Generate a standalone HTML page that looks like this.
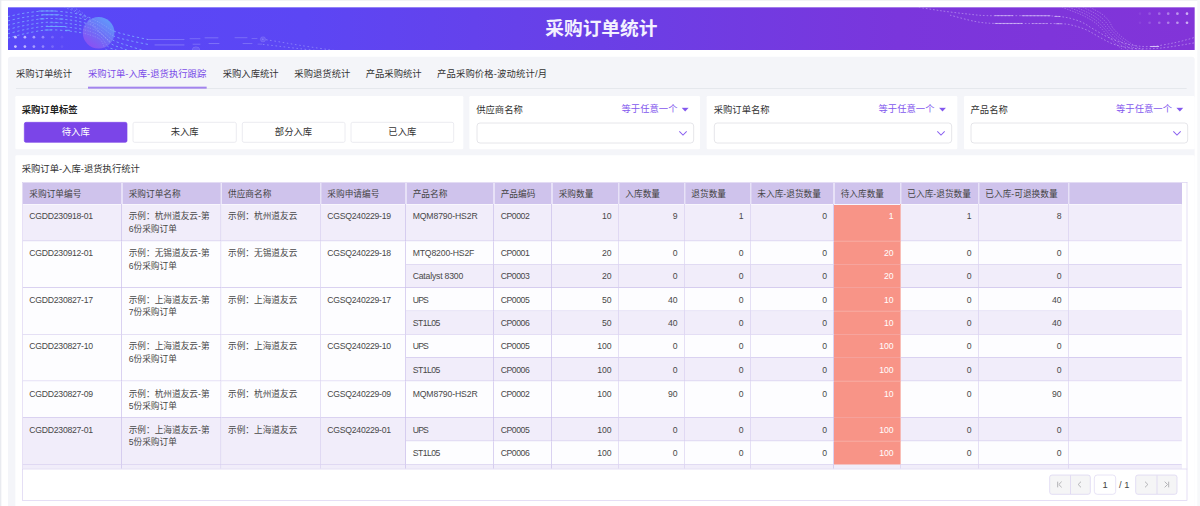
<!DOCTYPE html>
<html lang="zh-CN">
<head>
<meta charset="utf-8">
<title>采购订单统计</title>
<style>
*{box-sizing:border-box;margin:0;padding:0}
html,body{width:1200px;height:506px;overflow:hidden;background:#fff}
body{font-family:"Liberation Sans","Noto Sans CJK SC",sans-serif;font-size:14px;color:#333;line-height:19px}
#stage{position:absolute;left:0;top:0;width:1800px;height:759px;transform:scale(0.666667);transform-origin:0 0;background:#fff;overflow:hidden}
.abs{position:absolute}
#topstrip{left:0;top:0;width:1800px;height:1.4px;background:#eaecf1}
#leftstrip{left:0;top:0;width:2px;height:759px;background:#e9ebf0}
#rightstrip{left:1796px;top:0;width:4px;height:759px;background:#f7f8fa}
#banner{left:12px;top:11px;width:1780px;height:64px;background:linear-gradient(90deg,#5848f8 0%,#5c46f4 25%,#6a3fe6 50%,#7a36dc 75%,#8234d8 100%);overflow:hidden}
#banner svg{position:absolute;left:0;top:0}
#title{left:0;top:0;width:1780px;height:64px;line-height:65px;text-align:center;color:#f3f1ff;font-size:28px;font-weight:bold;letter-spacing:0}
#panel{left:12px;top:85px;width:1780px;height:690px;background:#f4f5f9;border-radius:4px}
.tabs{left:12px;top:0;width:1756px;height:47.3px}
.tabs:before{content:"";position:absolute;left:0;right:0;top:47.1px;height:1.1px;background:#dfe1e7}
.tab{position:absolute;top:0;height:46.3px;line-height:53.5px;white-space:nowrap;color:#333}
.tab.on{color:#7a4ce8}
.tab.on:after{content:"";position:absolute;left:-0.5px;right:-1px;top:45.3px;height:2.8px;background:#a384ee}
.card{position:absolute;background:#fff;border-radius:2px}
.lbl{position:absolute;white-space:nowrap;color:#333}
.any{position:absolute;white-space:nowrap;color:#8358ee}
.sel{position:absolute;height:31px;border:1px solid #d9dae0;border-radius:5px;background:#fff}
.sel svg{position:absolute;right:9px;top:11px}
.btn{position:absolute;top:39px;width:155.3px;height:31px;line-height:29px;text-align:center;border:1px solid #e2e2ea;border-radius:3px;background:#fff;color:#333}
.btn.on{background:#7b45e8;border-color:#7b45e8;color:#fff}

.tbox{position:absolute;left:10.500px;top:40.500px;width:1748px;height:431px;border:1px solid #d8cff0;border-bottom:0;overflow:hidden;background:#fff}
table.grid{border-collapse:separate;border-spacing:0;table-layout:fixed;width:1739px;font-size:13px}
.grid th{height:32px;background:#cfc3ec;font-weight:normal;text-align:left;padding:1px 0 0 9px;border-right:1px solid #f4f1fc;border-left:1px solid #f4f1fc;border-bottom:0;color:#444;white-space:nowrap;line-height:30px;vertical-align:middle;overflow:hidden}
.grid td{vertical-align:top;padding:7.500px 10px 0 10px;border-right:1px solid #c9bdeb;border-bottom:1px solid #c9bdeb;color:#484848;background:#fdfdff;line-height:19px;overflow:hidden;white-space:nowrap}
.grid tr.a td{background:#f1edfa}
.grid tr.a td[rowspan]{background:#f1edfa}
.grid td.n{text-align:right;padding-right:9.500px}
.grid tr.s td{padding-top:9.250px}
.grid th:last-child{border-right:0}
.grid th:first-child{border-left:0;padding-left:10px}
.grid tbody tr:first-child td{box-shadow:inset 0 1.500px 0 #f8f6fd}
.grid td:last-child{border-right-color:transparent}
.grid td.w{background:#f89487 !important;color:#fff;border-right-color:#f89487;border-bottom-color:#f3a9a6}
.en{letter-spacing:-0.400px}
.pager{position:absolute;left:10.500px;top:470.500px;width:1748px;height:48px;border:1px solid #d8cff0;background:#fff}
.pg{position:absolute;top:8px;height:30px;border:1px solid #d8d0f0;border-radius:4px;background:#f5f5f6}
.pg i{position:absolute;left:50%;top:0;bottom:0;width:1px;background:#d8d0f0}
.pg svg{position:absolute;left:-1px;top:-1px}
.pin{position:absolute;top:8px;width:33px;height:30px;border:1px solid #ddd6f2;border-radius:5px;background:#fff;text-align:center;line-height:28px;color:#444;font-size:14px}
.ptx{position:absolute;top:8px;line-height:30px;color:#444;white-space:nowrap;font-size:14px}
</style>
</head>
<body>
<div id="stage">
<div class="abs" id="topstrip"></div>
<div class="abs" id="leftstrip"></div>
<div class="abs" id="rightstrip"></div>
<div class="abs" id="banner">
<svg width="1780" height="64" viewBox="0 0 1186.667 42.667"><defs><linearGradient id="sph" x1="0.85" y1="0.1" x2="0.2" y2="0.95"><stop offset="0" stop-color="#62a4fb"/><stop offset="0.5" stop-color="#7072f6"/><stop offset="1" stop-color="#9150f2"/></linearGradient></defs><path d="M0.0 9.2C3.0 8.6 11.3 6.5 18.0 5.6C24.7 4.7 32.5 3.6 40.0 3.5C47.5 3.5 56.4 4.5 62.7 5.4C69.0 6.3 73.1 7.3 78.0 9.0C82.9 10.7 87.3 13.0 92.0 15.5C96.7 18.0 101.0 21.7 106.0 23.8C111.0 25.9 116.3 26.9 122.0 28.3C127.7 29.7 137.0 31.5 140.0 32.2" fill="none" stroke="#84b9ff" stroke-opacity="0.78" stroke-width="0.95" stroke-dasharray="2.3 2.5"/><path d="M0.0 13.5C3.0 12.9 11.3 10.7 18.0 9.7C24.7 8.7 32.5 7.5 40.0 7.4C47.5 7.3 56.4 8.2 62.7 9.1C69.0 10.0 73.1 10.9 78.0 12.5C82.9 14.1 87.3 16.1 92.0 18.8C96.7 21.5 101.0 26.4 106.0 28.8C111.0 31.2 116.0 31.8 122.0 33.3C128.0 34.8 138.7 36.8 142.0 37.5" fill="none" stroke="#84b9ff" stroke-opacity="0.78" stroke-width="0.95" stroke-dasharray="2.3 2.5"/><path d="M0.0 17.8C3.0 17.1 11.3 14.9 18.0 13.8C24.7 12.7 32.5 11.3 40.0 11.1C47.5 11.0 56.4 12.0 62.7 12.8C69.0 13.6 73.1 14.4 78.0 16.0C82.9 17.6 87.5 19.3 92.0 22.1C96.5 24.9 100.3 30.1 105.0 32.8C109.7 35.5 114.7 36.5 120.0 38.3C125.3 40.1 134.2 42.9 137.0 43.8" fill="none" stroke="#84b9ff" stroke-opacity="0.78" stroke-width="0.95" stroke-dasharray="2.3 2.5"/><path d="M0.0 22.1C3.0 21.4 11.3 19.1 18.0 17.9C24.7 16.7 32.5 15.2 40.0 14.9C47.5 14.7 56.4 15.7 62.7 16.5C69.0 17.3 73.1 18.0 78.0 19.5C82.9 21.0 87.8 22.6 92.0 25.4C96.2 28.2 99.3 33.7 103.0 36.3C106.7 38.9 110.5 39.4 114.0 40.8C117.5 42.2 122.3 44.1 124.0 44.8" fill="none" stroke="#84b9ff" stroke-opacity="0.78" stroke-width="0.95" stroke-dasharray="2.3 2.5"/><path d="M0.0 26.4C3.0 25.7 11.3 23.3 18.0 22.0C24.7 20.7 32.5 19.1 40.0 18.8C47.5 18.4 56.4 19.5 62.7 20.2C69.0 20.9 73.1 21.6 78.0 23.0C82.9 24.4 88.3 26.0 92.0 28.7C95.7 31.4 97.5 37.0 100.0 39.3C102.5 41.6 104.8 41.4 107.0 42.3C109.2 43.2 112.0 44.4 113.0 44.8" fill="none" stroke="#84b9ff" stroke-opacity="0.78" stroke-width="0.95" stroke-dasharray="2.3 2.5"/><path d="M0.0 30.7C3.0 29.9 11.3 27.5 18.0 26.1C24.7 24.7 32.5 22.9 40.0 22.6C47.5 22.2 56.4 23.2 62.7 23.9C69.0 24.6 73.1 25.2 78.0 26.5C82.9 27.9 88.8 29.5 92.0 32.0C95.2 34.5 95.5 39.4 97.0 41.3C98.5 43.2 99.7 42.7 101.0 43.3C102.3 43.9 104.3 44.5 105.0 44.8" fill="none" stroke="#84b9ff" stroke-opacity="0.78" stroke-width="0.95" stroke-dasharray="2.3 2.5"/><path d="M56.0 -0.2C57.8 0.5 63.7 2.5 67.0 4.3C70.3 6.1 74.5 9.7 76.0 10.8" fill="none" stroke="#9cc4ff" stroke-opacity="0.55" stroke-width="0.8" stroke-dasharray="1.6 1.8"/><path d="M60.5 -0.2C62.2 0.6 67.4 2.8 70.5 4.8C73.6 6.8 77.6 10.6 79.0 11.8" fill="none" stroke="#9cc4ff" stroke-opacity="0.55" stroke-width="0.8" stroke-dasharray="1.6 1.8"/><path d="M65.0 -0.2C66.5 0.7 71.2 3.1 74.0 5.3C76.8 7.5 80.7 11.6 82.0 12.8" fill="none" stroke="#9cc4ff" stroke-opacity="0.55" stroke-width="0.8" stroke-dasharray="1.6 1.8"/><path d="M254.0 31.8C256.2 32.1 260.7 32.8 267.0 33.8C273.3 34.8 282.0 36.4 292.0 38.0C302.0 39.6 321.2 42.4 327.0 43.3" fill="none" stroke="#c4ccff" stroke-opacity="0.5" stroke-width="0.8" stroke-dasharray="1.6 2.6"/><path d="M255.0 37.1C257.5 37.4 263.8 38.1 270.0 38.8C276.2 39.5 284.7 40.6 292.0 41.4C299.3 42.2 310.3 43.4 314.0 43.8" fill="none" stroke="#c4ccff" stroke-opacity="0.5" stroke-width="0.8" stroke-dasharray="1.6 2.6"/><path d="M31.0 3.6H47.5" stroke="#6fb2ff" stroke-opacity="0.80" stroke-width="1.1" stroke-linecap="round"/><path d="M34.0 7.4H51.0" stroke="#6fb2ff" stroke-opacity="0.80" stroke-width="1.1" stroke-linecap="round"/><path d="M32.0 11.5H36.0" stroke="#6fb2ff" stroke-opacity="0.70" stroke-width="1.1" stroke-linecap="round"/><path d="M51.0 11.6H55.0" stroke="#6fb2ff" stroke-opacity="0.70" stroke-width="1.1" stroke-linecap="round"/><path d="M42.0 15.4H51.0" stroke="#6fb2ff" stroke-opacity="0.45" stroke-width="1.1" stroke-linecap="round"/><path d="M38.5 19.2H57.5" stroke="#6fb2ff" stroke-opacity="0.80" stroke-width="1.1" stroke-linecap="round"/><path d="M37.0 22.7H43.5" stroke="#6fb2ff" stroke-opacity="0.70" stroke-width="1.1" stroke-linecap="round"/><path d="M57.5 23.0H61.5" stroke="#6fb2ff" stroke-opacity="0.70" stroke-width="1.1" stroke-linecap="round"/><circle cx="90.6" cy="25.4" r="15.8" fill="url(#sph)" fill-opacity="0.9"/><clipPath id="sc"><circle cx="90.6" cy="25.4" r="15.8"/></clipPath><g clip-path="url(#sc)"><path d="M0.0 9.2C3.0 8.6 11.3 6.5 18.0 5.6C24.7 4.7 32.5 3.6 40.0 3.5C47.5 3.5 56.4 4.5 62.7 5.4C69.0 6.3 73.1 7.3 78.0 9.0C82.9 10.7 87.3 13.0 92.0 15.5C96.7 18.0 101.0 21.7 106.0 23.8C111.0 25.9 116.3 26.9 122.0 28.3C127.7 29.7 137.0 31.5 140.0 32.2" fill="none" stroke="#c9d4ff" stroke-opacity="0.28" stroke-width="0.8" stroke-dasharray="1.2 1.4"/><path d="M0.0 13.5C3.0 12.9 11.3 10.7 18.0 9.7C24.7 8.7 32.5 7.5 40.0 7.4C47.5 7.3 56.4 8.2 62.7 9.1C69.0 10.0 73.1 10.9 78.0 12.5C82.9 14.1 87.3 16.1 92.0 18.8C96.7 21.5 101.0 26.4 106.0 28.8C111.0 31.2 116.0 31.8 122.0 33.3C128.0 34.8 138.7 36.8 142.0 37.5" fill="none" stroke="#c9d4ff" stroke-opacity="0.28" stroke-width="0.8" stroke-dasharray="1.2 1.4"/><path d="M0.0 17.8C3.0 17.1 11.3 14.9 18.0 13.8C24.7 12.7 32.5 11.3 40.0 11.1C47.5 11.0 56.4 12.0 62.7 12.8C69.0 13.6 73.1 14.4 78.0 16.0C82.9 17.6 87.5 19.3 92.0 22.1C96.5 24.9 100.3 30.1 105.0 32.8C109.7 35.5 114.7 36.5 120.0 38.3C125.3 40.1 134.2 42.9 137.0 43.8" fill="none" stroke="#c9d4ff" stroke-opacity="0.28" stroke-width="0.8" stroke-dasharray="1.2 1.4"/><path d="M0.0 22.1C3.0 21.4 11.3 19.1 18.0 17.9C24.7 16.7 32.5 15.2 40.0 14.9C47.5 14.7 56.4 15.7 62.7 16.5C69.0 17.3 73.1 18.0 78.0 19.5C82.9 21.0 87.8 22.6 92.0 25.4C96.2 28.2 99.3 33.7 103.0 36.3C106.7 38.9 110.5 39.4 114.0 40.8C117.5 42.2 122.3 44.1 124.0 44.8" fill="none" stroke="#c9d4ff" stroke-opacity="0.28" stroke-width="0.8" stroke-dasharray="1.2 1.4"/><path d="M0.0 26.4C3.0 25.7 11.3 23.3 18.0 22.0C24.7 20.7 32.5 19.1 40.0 18.8C47.5 18.4 56.4 19.5 62.7 20.2C69.0 20.9 73.1 21.6 78.0 23.0C82.9 24.4 88.3 26.0 92.0 28.7C95.7 31.4 97.5 37.0 100.0 39.3C102.5 41.6 104.8 41.4 107.0 42.3C109.2 43.2 112.0 44.4 113.0 44.8" fill="none" stroke="#c9d4ff" stroke-opacity="0.28" stroke-width="0.8" stroke-dasharray="1.2 1.4"/><path d="M0.0 30.7C3.0 29.9 11.3 27.5 18.0 26.1C24.7 24.7 32.5 22.9 40.0 22.6C47.5 22.2 56.4 23.2 62.7 23.9C69.0 24.6 73.1 25.2 78.0 26.5C82.9 27.9 88.8 29.5 92.0 32.0C95.2 34.5 95.5 39.4 97.0 41.3C98.5 43.2 99.7 42.7 101.0 43.3C102.3 43.9 104.3 44.5 105.0 44.8" fill="none" stroke="#c9d4ff" stroke-opacity="0.28" stroke-width="0.8" stroke-dasharray="1.2 1.4"/><path d="M76.0 10.8C78.2 12.8 84.3 18.6 89.0 22.8C93.7 27.0 99.2 32.1 104.0 35.8C108.8 39.5 115.7 43.3 118.0 44.8" fill="none" stroke="#c9d4ff" stroke-opacity="0.28" stroke-width="0.8" stroke-dasharray="1.2 1.4"/><path d="M79.0 11.8C81.0 13.9 86.6 20.1 91.0 24.3C95.4 28.5 100.7 33.6 105.5 37.0C110.3 40.4 117.6 43.5 120.0 44.8" fill="none" stroke="#c9d4ff" stroke-opacity="0.28" stroke-width="0.8" stroke-dasharray="1.2 1.4"/><path d="M82.0 12.8C83.8 15.0 88.8 21.6 93.0 25.8C97.2 30.0 102.2 35.0 107.0 38.2C111.8 41.4 119.5 43.7 122.0 44.8" fill="none" stroke="#c9d4ff" stroke-opacity="0.28" stroke-width="0.8" stroke-dasharray="1.2 1.4"/></g><path d="M140.0 32.2H176.0" stroke="#cfd6ff" stroke-opacity="0.33" stroke-width="0.9" stroke-linecap="round"/><path d="M182.0 31.4H192.0" stroke="#cfd6ff" stroke-opacity="0.30" stroke-width="0.9" stroke-linecap="round"/><path d="M197.0 30.5H210.0" stroke="#cfd6ff" stroke-opacity="0.33" stroke-width="0.9" stroke-linecap="round"/><path d="M227.0 30.4H239.0" stroke="#cfd6ff" stroke-opacity="0.30" stroke-width="0.9" stroke-linecap="round"/><path d="M244.0 31.2H249.0" stroke="#cfd6ff" stroke-opacity="0.27" stroke-width="0.9" stroke-linecap="round"/><path d="M147.0 37.6H176.0" stroke="#cfd6ff" stroke-opacity="0.36" stroke-width="0.9" stroke-linecap="round"/><path d="M185.0 36.9H192.0" stroke="#cfd6ff" stroke-opacity="0.30" stroke-width="0.9" stroke-linecap="round"/><path d="M201.0 36.2H211.0" stroke="#cfd6ff" stroke-opacity="0.33" stroke-width="0.9" stroke-linecap="round"/><path d="M235.0 36.2H244.0" stroke="#cfd6ff" stroke-opacity="0.30" stroke-width="0.9" stroke-linecap="round"/><path d="M250.0 36.8H254.0" stroke="#cfd6ff" stroke-opacity="0.27" stroke-width="0.9" stroke-linecap="round"/><circle cx="255.0" cy="32.0" r="2.6" fill="#b9b4ff" fill-opacity="0.18" stroke="#d5d2ff" stroke-opacity="0.28" stroke-width="0.5"/><circle cx="188.0" cy="43.4" r="4" fill="#b9b4ff" fill-opacity="0.18" stroke="#d5d2ff" stroke-opacity="0.3" stroke-width="0.5"/><circle cx="7.4" cy="29.8" r="1.35" fill="#e8e4ff" fill-opacity="0.80"/><circle cx="16.9" cy="29.8" r="1.35" fill="#e8e4ff" fill-opacity="0.70"/><circle cx="25.9" cy="29.8" r="1.35" fill="#e8e4ff" fill-opacity="0.55"/><circle cx="35.0" cy="29.8" r="1.35" fill="#e8e4ff" fill-opacity="0.40"/><circle cx="44.5" cy="29.8" r="1.35" fill="#e8e4ff" fill-opacity="0.22"/><circle cx="54.0" cy="29.8" r="1.35" fill="#e8e4ff" fill-opacity="0.10"/><circle cx="7.4" cy="39.2" r="1.35" fill="#e8e4ff" fill-opacity="0.80"/><circle cx="16.9" cy="39.2" r="1.35" fill="#e8e4ff" fill-opacity="0.70"/><circle cx="25.9" cy="39.2" r="1.35" fill="#e8e4ff" fill-opacity="0.55"/><circle cx="35.0" cy="39.2" r="1.35" fill="#e8e4ff" fill-opacity="0.40"/><circle cx="44.5" cy="39.2" r="1.35" fill="#e8e4ff" fill-opacity="0.22"/><circle cx="54.0" cy="39.2" r="1.35" fill="#e8e4ff" fill-opacity="0.10"/><path d="M910.8 0.0C914.3 0.5 924.3 2.2 932.0 3.3C939.7 4.4 949.2 5.6 957.0 6.4C964.8 7.2 969.0 8.0 979.0 8.3C989.0 8.6 1004.8 8.2 1017.0 8.4C1029.2 8.5 1042.8 8.2 1052.0 9.2C1061.2 10.2 1066.5 12.1 1072.0 14.1C1077.5 16.2 1080.0 18.7 1085.0 21.5C1090.0 24.3 1095.8 28.2 1102.0 30.8C1108.2 33.4 1115.3 35.9 1122.0 37.3C1128.7 38.7 1134.5 39.5 1142.0 39.2C1149.5 38.9 1159.5 36.8 1167.0 35.3C1174.5 33.8 1183.4 31.0 1186.7 30.1" fill="none" stroke="#e6dcff" stroke-opacity="0.52" stroke-width="0.8" stroke-dasharray="1.7 1.9"/><path d="M942.0 7.8C946.2 8.8 959.5 12.7 967.0 14.1C974.5 15.5 977.8 15.8 987.0 16.1C996.2 16.5 1011.0 16.1 1022.0 16.2C1033.0 16.2 1045.8 16.1 1053.0 16.4C1060.2 16.7 1060.7 17.0 1065.0 18.1C1069.3 19.2 1074.5 20.8 1079.0 22.8C1083.5 24.8 1087.3 27.7 1092.0 30.1C1096.7 32.5 1101.2 35.5 1107.0 37.3C1112.8 39.1 1119.5 40.5 1127.0 41.1C1134.5 41.7 1142.0 41.7 1152.0 40.8C1162.0 39.9 1180.9 36.4 1186.7 35.5" fill="none" stroke="#e6dcff" stroke-opacity="0.52" stroke-width="0.8" stroke-dasharray="1.7 1.9"/><path d="M1054.0 0.0C1057.0 1.1 1066.8 4.5 1072.0 6.8C1077.2 9.1 1081.5 11.5 1085.0 13.8C1088.5 16.1 1090.5 18.3 1093.0 20.8C1095.5 23.3 1097.5 26.1 1100.0 28.8C1102.5 31.5 1105.3 34.4 1108.0 36.8C1110.7 39.2 1114.7 42.2 1116.0 43.3" fill="none" stroke="#e6dcff" stroke-opacity="0.42" stroke-width="0.7" stroke-dasharray="1.5 1.2"/><path d="M1061.0 0.0C1063.8 1.1 1072.8 4.5 1077.5 6.8C1082.2 9.1 1085.9 11.5 1089.0 13.8C1092.1 16.1 1093.6 18.3 1096.0 20.8C1098.4 23.3 1100.5 26.1 1103.2 28.8C1105.9 31.5 1109.0 34.4 1112.0 36.8C1115.0 39.2 1119.5 42.2 1121.0 43.3" fill="none" stroke="#e6dcff" stroke-opacity="0.42" stroke-width="0.7" stroke-dasharray="1.5 1.2"/><path d="M1068.0 0.0C1070.5 1.1 1078.8 4.5 1083.0 6.8C1087.2 9.1 1090.3 11.5 1093.0 13.8C1095.7 16.1 1096.8 18.3 1099.0 20.8C1101.2 23.3 1103.6 26.1 1106.4 28.8C1109.2 31.5 1112.7 34.4 1116.0 36.8C1119.3 39.2 1124.3 42.2 1126.0 43.3" fill="none" stroke="#e6dcff" stroke-opacity="0.42" stroke-width="0.7" stroke-dasharray="1.5 1.2"/><path d="M1075.0 0.0C1077.2 1.1 1084.8 4.5 1088.5 6.8C1092.2 9.1 1094.8 11.5 1097.0 13.8C1099.2 16.1 1099.9 18.3 1102.0 20.8C1104.1 23.3 1106.6 26.1 1109.6 28.8C1112.6 31.5 1116.4 34.4 1120.0 36.8C1123.6 39.2 1129.2 42.2 1131.0 43.3" fill="none" stroke="#e6dcff" stroke-opacity="0.42" stroke-width="0.7" stroke-dasharray="1.5 1.2"/><path d="M1082.0 0.0C1084.0 1.1 1090.8 4.5 1094.0 6.8C1097.2 9.1 1099.2 11.5 1101.0 13.8C1102.8 16.1 1103.0 18.3 1105.0 20.8C1107.0 23.3 1109.6 26.1 1112.8 28.8C1116.0 31.5 1120.1 34.4 1124.0 36.8C1127.9 39.2 1134.0 42.2 1136.0 43.3" fill="none" stroke="#e6dcff" stroke-opacity="0.42" stroke-width="0.7" stroke-dasharray="1.5 1.2"/><path d="M987.0 8.3H1004.5" stroke="#eadfff" stroke-opacity="0.55" stroke-width="1.0" stroke-linecap="round"/><path d="M1014.0 8.4H1042.0" stroke="#eadfff" stroke-opacity="0.60" stroke-width="1.0" stroke-linecap="round"/><path d="M1046.7 9.1H1052.0" stroke="#eadfff" stroke-opacity="0.55" stroke-width="1.0" stroke-linecap="round"/><path d="M987.0 16.1H1014.0" stroke="#eadfff" stroke-opacity="0.60" stroke-width="1.0" stroke-linecap="round"/><path d="M1024.0 16.2H1039.0" stroke="#eadfff" stroke-opacity="0.30" stroke-width="1.0" stroke-linecap="round"/><path d="M1048.0 16.4H1053.0" stroke="#eadfff" stroke-opacity="0.50" stroke-width="1.0" stroke-linecap="round"/><path d="M1142.7 39.2H1150.7" stroke="#eadfff" stroke-opacity="0.80" stroke-width="1.0" stroke-linecap="round"/><circle cx="1132.0" cy="6.3" r="1.35" fill="#efe6ff" fill-opacity="0.08"/><circle cx="1141.6" cy="6.3" r="1.35" fill="#efe6ff" fill-opacity="0.18"/><circle cx="1151.3" cy="6.3" r="1.35" fill="#efe6ff" fill-opacity="0.30"/><circle cx="1160.2" cy="6.3" r="1.35" fill="#efe6ff" fill-opacity="0.42"/><circle cx="1169.4" cy="6.3" r="1.35" fill="#efe6ff" fill-opacity="0.55"/><circle cx="1179.0" cy="6.3" r="1.35" fill="#efe6ff" fill-opacity="0.70"/><circle cx="1132.0" cy="15.4" r="1.35" fill="#efe6ff" fill-opacity="0.08"/><circle cx="1141.6" cy="15.4" r="1.35" fill="#efe6ff" fill-opacity="0.18"/><circle cx="1151.3" cy="15.4" r="1.35" fill="#efe6ff" fill-opacity="0.30"/><circle cx="1160.2" cy="15.4" r="1.35" fill="#efe6ff" fill-opacity="0.42"/><circle cx="1169.4" cy="15.4" r="1.35" fill="#efe6ff" fill-opacity="0.55"/><circle cx="1179.0" cy="15.4" r="1.35" fill="#efe6ff" fill-opacity="0.70"/></svg>
<div class="abs" id="title">采购订单统计</div>
</div>
<div class="abs" id="panel">
 <div class="abs tabs">
  <div class="tab" style="left:0">采购订单统计</div>
  <div class="tab on" style="left:108px">采购订单-入库-退货执行跟踪</div>
  <div class="tab" style="left:310px">采购入库统计</div>
  <div class="tab" style="left:417.5px">采购退货统计</div>
  <div class="tab" style="left:524.5px">产品采购统计</div>
  <div class="tab" style="left:631.5px;letter-spacing:0.2px">产品采购价格-波动统计/月</div>
 </div>
 <div class="card" style="left:10.5px;top:58.5px;width:672.5px;height:80px">
  <div class="lbl" style="left:10px;top:11px;font-weight:bold;color:#222">采购订单标签</div>
  <div class="btn on" style="left:13.5px">待入库</div>
  <div class="btn" style="left:176.8px">未入库</div>
  <div class="btn" style="left:340.1px">部分入库</div>
  <div class="btn" style="left:503.4px">已入库</div>
 </div>
 <div class="card" style="left:692.25px;top:58.5px;width:346px;height:80px">
  <div class="lbl" style="left:10px;top:11px">供应商名称</div>
  <div class="any" style="right:16.5px;top:10px">等于任意一个<svg width="11.5" height="6.6" viewBox="0 0 11 7" preserveAspectRatio="none" style="vertical-align:0;margin-left:6px"><path d="M0.5 0.5h10l-5 6z" fill="#8358ee"/></svg></div>
  <div class="sel" style="left:10.5px;top:40px;width:326px"><svg width="13" height="8" viewBox="0 0 13 8"><path d="M1 1l5.5 5.5L12 1" fill="none" stroke="#8a60f0" stroke-width="1.5"/></svg></div>
 </div>
 <div class="card" style="left:1047.75px;top:58.5px;width:376px;height:80px">
  <div class="lbl" style="left:10.75px;top:11px">采购订单名称</div>
  <div class="any" style="right:16.5px;top:10px">等于任意一个<svg width="11.5" height="6.6" viewBox="0 0 11 7" preserveAspectRatio="none" style="vertical-align:0;margin-left:6px"><path d="M0.5 0.5h10l-5 6z" fill="#8358ee"/></svg></div>
  <div class="sel" style="left:11.5px;top:40px;width:357px"><svg width="13" height="8" viewBox="0 0 13 8"><path d="M1 1l5.5 5.5L12 1" fill="none" stroke="#8a60f0" stroke-width="1.5"/></svg></div>
 </div>
 <div class="card" style="left:1433.75px;top:58.5px;width:346.25px;height:80px">
  <div class="lbl" style="left:10px;top:11px">产品名称</div>
  <div class="any" style="right:16.5px;top:10px">等于任意一个<svg width="11.5" height="6.6" viewBox="0 0 11 7" preserveAspectRatio="none" style="vertical-align:0;margin-left:6px"><path d="M0.5 0.5h10l-5 6z" fill="#8358ee"/></svg></div>
  <div class="sel" style="left:10.5px;top:40px;width:326px"><svg width="13" height="8" viewBox="0 0 13 8"><path d="M1 1l5.5 5.5L12 1" fill="none" stroke="#8a60f0" stroke-width="1.5"/></svg></div>
 </div>
 <div class="card" id="tcard" style="left:10.5px;top:147.5px;width:1769.5px;height:560px">
  <div class="lbl" style="left:10px;top:11px">采购订单-入库-退货执行统计</div>
<div class="tbox"><table class="grid"><colgroup>
<col style="width:149px">
<col style="width:149px">
<col style="width:149px">
<col style="width:128px">
<col style="width:132px">
<col style="width:87px">
<col style="width:100px">
<col style="width:99px">
<col style="width:99px">
<col style="width:125px">
<col style="width:100px">
<col style="width:117px">
<col style="width:135px">
<col style="width:170px">
</colgroup><thead><tr>
<th>采购订单编号</th>
<th>采购订单名称</th>
<th>供应商名称</th>
<th>采购申请编号</th>
<th>产品名称</th>
<th>产品编码</th>
<th>采购数量</th>
<th>入库数量</th>
<th>退货数量</th>
<th>未入库-退货数量</th>
<th>待入库数量</th>
<th>已入库-退货数量</th>
<th>已入库-可退换数量</th>
<th></th>
</tr></thead><tbody>
<tr class="a s" style="height:56px">
<td><span class="en">CGDD230918-01</span></td>
<td>示例：杭州道友云-第<br>6份采购订单</td>
<td>示例：杭州道友云</td>
<td><span class="en">CGSQ240229-19</span></td>
<td><span class="en" style="letter-spacing:-0.20px">MQM8790-HS2R</span></td><td><span class="en" style="letter-spacing:-0.65px">CP0002</span></td>
<td class="n">10</td>
<td class="n">9</td>
<td class="n">1</td>
<td class="n">0</td>
<td class="n w">1</td>
<td class="n">1</td>
<td class="n">8</td>
<td></td>
</tr>
<tr class="b" style="height:35px">
<td rowspan="2"><span class="en">CGDD230912-01</span></td>
<td rowspan="2">示例：无锡道友云-第<br>6份采购订单</td>
<td rowspan="2">示例：无锡道友云</td>
<td rowspan="2"><span class="en">CGSQ240229-18</span></td>
<td><span class="en" style="letter-spacing:-0.25px">MTQ8200-HS2F</span></td><td><span class="en" style="letter-spacing:-0.65px">CP0001</span></td>
<td class="n">20</td>
<td class="n">0</td>
<td class="n">0</td>
<td class="n">0</td>
<td class="n w">20</td>
<td class="n">0</td>
<td class="n">0</td>
<td></td>
</tr>
<tr class="a" style="height:35px">
<td><span class="en" style="letter-spacing:-0.30px">Catalyst 8300</span></td><td><span class="en" style="letter-spacing:-0.65px">CP0003</span></td>
<td class="n">20</td>
<td class="n">0</td>
<td class="n">0</td>
<td class="n">0</td>
<td class="n w">20</td>
<td class="n">0</td>
<td class="n">0</td>
<td></td>
</tr>
<tr class="b" style="height:35px">
<td rowspan="2"><span class="en">CGDD230827-17</span></td>
<td rowspan="2">示例：上海道友云-第<br>7份采购订单</td>
<td rowspan="2">示例：上海道友云</td>
<td rowspan="2"><span class="en">CGSQ240229-17</span></td>
<td><span class="en" style="letter-spacing:-1.20px">UPS</span></td><td><span class="en" style="letter-spacing:-0.65px">CP0005</span></td>
<td class="n">50</td>
<td class="n">40</td>
<td class="n">0</td>
<td class="n">0</td>
<td class="n w">10</td>
<td class="n">0</td>
<td class="n">40</td>
<td></td>
</tr>
<tr class="a" style="height:35px">
<td><span class="en" style="letter-spacing:-0.80px">ST1L05</span></td><td><span class="en" style="letter-spacing:-0.65px">CP0006</span></td>
<td class="n">50</td>
<td class="n">40</td>
<td class="n">0</td>
<td class="n">0</td>
<td class="n w">10</td>
<td class="n">0</td>
<td class="n">40</td>
<td></td>
</tr>
<tr class="b" style="height:35px">
<td rowspan="2"><span class="en">CGDD230827-10</span></td>
<td rowspan="2">示例：上海道友云-第<br>6份采购订单</td>
<td rowspan="2">示例：上海道友云</td>
<td rowspan="2"><span class="en">CGSQ240229-10</span></td>
<td><span class="en" style="letter-spacing:-1.20px">UPS</span></td><td><span class="en" style="letter-spacing:-0.65px">CP0005</span></td>
<td class="n">100</td>
<td class="n">0</td>
<td class="n">0</td>
<td class="n">0</td>
<td class="n w">100</td>
<td class="n">0</td>
<td class="n">0</td>
<td></td>
</tr>
<tr class="a" style="height:35px">
<td><span class="en" style="letter-spacing:-0.80px">ST1L05</span></td><td><span class="en" style="letter-spacing:-0.65px">CP0006</span></td>
<td class="n">100</td>
<td class="n">0</td>
<td class="n">0</td>
<td class="n">0</td>
<td class="n w">100</td>
<td class="n">0</td>
<td class="n">0</td>
<td></td>
</tr>
<tr class="b s" style="height:55px">
<td><span class="en">CGDD230827-09</span></td>
<td>示例：杭州道友云-第<br>5份采购订单</td>
<td>示例：杭州道友云</td>
<td><span class="en">CGSQ240229-09</span></td>
<td><span class="en" style="letter-spacing:-0.20px">MQM8790-HS2R</span></td><td><span class="en" style="letter-spacing:-0.65px">CP0002</span></td>
<td class="n">100</td>
<td class="n">90</td>
<td class="n">0</td>
<td class="n">0</td>
<td class="n w">10</td>
<td class="n">0</td>
<td class="n">90</td>
<td></td>
</tr>
<tr class="a" style="height:35px">
<td rowspan="2"><span class="en">CGDD230827-01</span></td>
<td rowspan="2">示例：上海道友云-第<br>5份采购订单</td>
<td rowspan="2">示例：上海道友云</td>
<td rowspan="2"><span class="en">CGSQ240229-01</span></td>
<td><span class="en" style="letter-spacing:-1.20px">UPS</span></td><td><span class="en" style="letter-spacing:-0.65px">CP0005</span></td>
<td class="n">100</td>
<td class="n">0</td>
<td class="n">0</td>
<td class="n">0</td>
<td class="n w">100</td>
<td class="n">0</td>
<td class="n">0</td>
<td></td>
</tr>
<tr class="b" style="height:35px">
<td><span class="en" style="letter-spacing:-0.80px">ST1L05</span></td><td><span class="en" style="letter-spacing:-0.65px">CP0006</span></td>
<td class="n">100</td>
<td class="n">0</td>
<td class="n">0</td>
<td class="n">0</td>
<td class="n w">100</td>
<td class="n">0</td>
<td class="n">0</td>
<td></td>
</tr>
<tr class="a s" style="height:55px">
<td></td>
<td></td>
<td></td>
<td></td>
<td></td>
<td></td>
<td></td>
<td></td>
<td></td>
<td></td>
<td></td>
<td></td>
<td></td>
<td></td>
</tr>
</tbody></table></div>
<div class="pager">
<div class="pg" style="left:1539.500px;width:62px"><i></i>
<svg width="62" height="30" viewBox="0 0 62 30"><path d="M12.500 10.500v8.500M18.500 10.500l-4.300 4.250 4.300 4.250" fill="none" stroke="#a9a9ad" stroke-width="1.300"/><path d="M47.500 10.500l-4.300 4.250 4.300 4.250" fill="none" stroke="#a9a9ad" stroke-width="1.300"/></svg></div>
<div class="pin" style="left:1607px">1</div>
<div class="ptx" style="left:1644.500px">/ 1</div>
<div class="pg" style="left:1669.250px;width:62.500px"><i></i>
<svg width="62" height="30" viewBox="0 0 62 30"><path d="M14.500 10.500l4.300 4.250-4.300 4.250" fill="none" stroke="#a9a9ad" stroke-width="1.300"/><path d="M50 10.500v8.500M44 10.500l4.300 4.250-4.300 4.250" fill="none" stroke="#a9a9ad" stroke-width="1.300"/></svg></div>
</div>
 </div>
</div>
</div>
</body>
</html>
